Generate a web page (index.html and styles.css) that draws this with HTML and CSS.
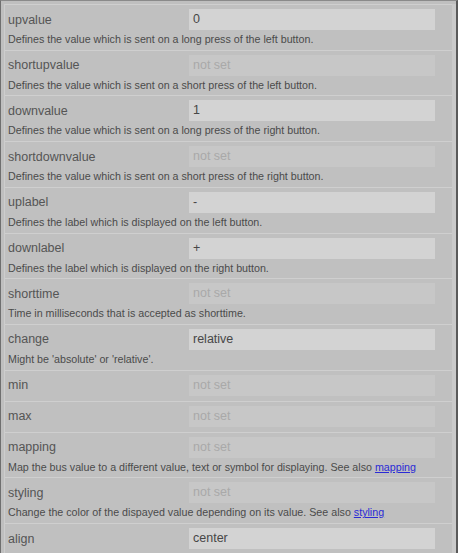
FILE: index.html
```html
<!DOCTYPE html>
<html>
<head>
<meta charset="utf-8">
<link rel="stylesheet" href="styles.css">
</head>
<body>
<div class="frame">
  <div class="list">
    <div class="row">
      <div class="line"><span class="label">upvalue</span><div class="input">0</div></div>
      <div class="desc">Defines the value which is sent on a long press of the left button.</div>
    </div>
    <div class="row">
      <div class="line"><span class="label">shortupvalue</span><div class="input empty">not set</div></div>
      <div class="desc">Defines the value which is sent on a short press of the left button.</div>
    </div>
    <div class="row">
      <div class="line"><span class="label">downvalue</span><div class="input">1</div></div>
      <div class="desc">Defines the value which is sent on a long press of the right button.</div>
    </div>
    <div class="row">
      <div class="line"><span class="label">shortdownvalue</span><div class="input empty">not set</div></div>
      <div class="desc">Defines the value which is sent on a short press of the right button.</div>
    </div>
    <div class="row">
      <div class="line"><span class="label">uplabel</span><div class="input">-</div></div>
      <div class="desc">Defines the label which is displayed on the left button.</div>
    </div>
    <div class="row">
      <div class="line"><span class="label">downlabel</span><div class="input">+</div></div>
      <div class="desc">Defines the label which is displayed on the right button.</div>
    </div>
    <div class="row">
      <div class="line"><span class="label">shorttime</span><div class="input empty">not set</div></div>
      <div class="desc">Time in milliseconds that is accepted as shorttime.</div>
    </div>
    <div class="row">
      <div class="line"><span class="label">change</span><div class="input">relative</div></div>
      <div class="desc">Might be 'absolute' or 'relative'.</div>
    </div>
    <div class="row">
      <div class="line"><span class="label">min</span><div class="input empty">not set</div></div>
    </div>
    <div class="row">
      <div class="line"><span class="label">max</span><div class="input empty">not set</div></div>
    </div>
    <div class="row">
      <div class="line"><span class="label">mapping</span><div class="input empty">not set</div></div>
      <div class="desc">Map the bus value to a different value, text or symbol for displaying. See also <a href="#">mapping</a></div>
    </div>
    <div class="row">
      <div class="line"><span class="label">styling</span><div class="input empty">not set</div></div>
      <div class="desc">Change the color of the dispayed value depending on its value. See also <a href="#">styling</a></div>
    </div>
    <div class="row">
      <div class="line"><span class="label">align</span><div class="input">center</div></div>
    </div>
  </div>
</div>
</body>
</html>
```
FILE: styles.css
```css
html, body {
  margin: 0;
  padding: 0;
  background: #c0c0c0;
  overflow: hidden;
  height: 553px;
}
body {
  font-family: "Liberation Sans", Arial, sans-serif;
}
.frame {
  border-top: 1px solid #8a8a8a;
  border-left: 1px solid #6f6f6f;
  border-right: 2px solid #5a5a5a;
  padding: 3px 0 0 3px;
  background: #bfbfbf;
  min-height: 600px;
}
.list {
  border-left: 1px solid #cdcdcd;
  border-right: 4px solid #cacaca;
}
.row {
  border-top: 1px solid #cfcfcf;
  padding: 4px 0 5px 3px;
  background: #c0c0c0;
}
.line {
  display: flex;
  align-items: center;
  height: 21px;
}
.label {
  width: 181px;
  font-size: 12.5px;
  color: #555555;
}
.input {
  width: 242px;
  height: 21px;
  line-height: 21px;
  padding-left: 4px;
  background: #d3d3d3;
  font-size: 12.5px;
  color: #474747;
}
.input.empty {
  background: #c7c7c7;
  color: #a9a9a9;
}
.desc {
  margin-top: 2px;
  margin-bottom: -2px;
  font-size: 10.7px;
  line-height: 14.7px;
  color: #4b4b4b;
}
.desc a {
  color: #2b2bd6;
  text-decoration: underline;
}
```
